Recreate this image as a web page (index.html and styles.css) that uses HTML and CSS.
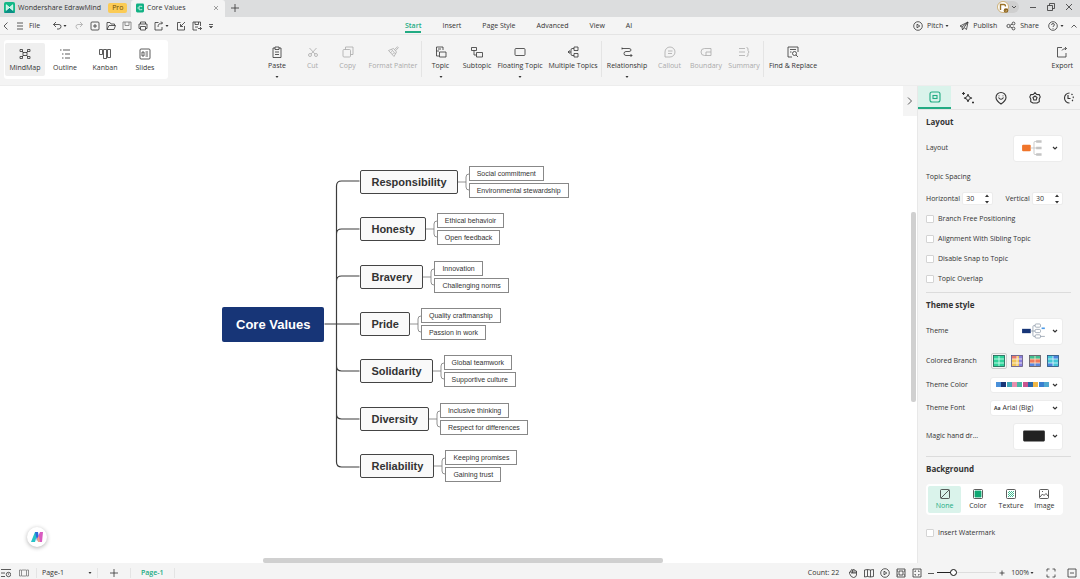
FILE: index.html
```
<!DOCTYPE html>
<html lang="en">
<head>
  <meta charset="UTF-8" />
  <meta name="viewport" content="width=device-width, initial-scale=1" />
  <title>Core Values - Wondershare EdrawMind</title>
  <link rel="stylesheet" href="styles.css">
</head>
<body>
  <!-- shared shapes -->
  <svg class="sprite" aria-hidden="true">
    <symbol id="caret" viewBox="0 0 6 6"><path d="M1.500 2h3L3 4z" fill="currentColor" stroke="none"/></symbol>
    <symbol id="chev" viewBox="0 0 6 6"><path d="M1 2l2 2 2-2"/></symbol>
    <symbol id="fork" viewBox="0 0 11 30"><path d="M0 15H8M11 7Q8 7 8 10V20Q8 23 11 23"/></symbol>
  </svg>

  <!-- TITLE BAR -->
  <header class="titlebar">
    <div class="app-name">
      <svg class="logo" viewBox="0 0 12 12"><rect width="12" height="12" rx="2" fill="#12b886"/><path d="M0 12L6 6l6 6z" fill="#0a8f86"/><path d="M2.500 9V3L6 6l3.500-3v6L6 6z" fill="#b9f3e0" stroke="#fff"/></svg>
      <span>Wondershare EdrawMind</span>
      <span class="pro">Pro</span>
    </div>
    <div class="doc-tab">
      <svg class="doc-logo" viewBox="0 0 9 10"><rect width="9" height="10" rx="1.500" fill="#10b183"/><path d="M1.500 5h2M3.500 3v4M3.500 3h3M3.500 7h3M6.500 3v1M6.500 6v1" stroke="#fff"/></svg>
      <span>Core Values</span>
      <button class="close-tab" aria-label="Close tab"><svg class="i6" viewBox="0 0 6 6"><path d="M1 1l4 4M5 1L1 5"/></svg></button>
    </div>
    <button class="new-tab" aria-label="New tab"><svg class="i8" viewBox="0 0 8 8"><path d="M4 0v8M0 4h8"/></svg></button>
    <div class="window-tools">
      <button class="avatar" aria-label="Account">
        <svg class="i12" viewBox="0 0 12 12"><circle cx="6" cy="6" r="5.500" fill="#fff" stroke="#c9a55c"/><path d="M3.500 9V3.500h3.500q1.500 0 1.500 2" stroke="#9a7228" stroke-width="1.400"/><circle cx="9" cy="9.500" r="2.300" fill="#8a611d" stroke="none"/><path d="M8 9.500l1 1 1-1.500" stroke="#ffe2a0" stroke-width=".6"/></svg>
        <svg class="i6"><use href="#chev"/></svg>
      </button>
      <button aria-label="Minimize"><svg class="i8" viewBox="0 0 8 8"><path d="M1 4.500h6"/></svg></button>
      <button aria-label="Restore"><svg class="i8" viewBox="0 0 8 8"><path d="M.5 2.500h5v5h-5zM2.500 2.500v-2h5v5h-2"/></svg></button>
      <button aria-label="Close"><svg class="i8" viewBox="0 0 8 8"><path d="M1 1l6 6M7 1L1 7"/></svg></button>
    </div>
  </header>

  <!-- MENU BAR -->
  <nav class="menubar">
    <div class="quick">
      <button aria-label="Back"><svg class="i8" viewBox="0 0 8 8"><path d="M5.500 0.500L2 4l3.500 3.500"/></svg></button>
      <button class="file"><svg class="i8" viewBox="0 0 8 8"><path d="M1 1h6M1 4h6M1 7h6"/></svg>File</button>
      <button aria-label="Undo"><svg class="i10" viewBox="0 0 10 10"><path d="M4 1L1.500 3.500 4 6M1.500 3.500H7q2 0 2 2T7 8H5"/></svg><svg class="i6"><use href="#caret"/></svg></button>
      <button class="off" aria-label="Redo"><svg class="i10" viewBox="0 0 10 10"><path d="M6 1l2.500 2.500L6 6M8.500 3.500H4q-2 0-2 2T4 8"/></svg></button>
      <button aria-label="New"><svg class="i10" viewBox="0 0 10 10"><rect x="1" y="1" width="8" height="8" rx="1"/><path d="M5 3v4M3 5h4"/></svg></button>
      <button aria-label="Open"><svg class="i10" viewBox="0 0 10 10"><path d="M1 8.500V1.500h3l1 1.500h3.500v1.500M1 8.500h7l1.500-4H3z"/></svg></button>
      <button class="dim" aria-label="Save"><svg class="i10" viewBox="0 0 10 10"><path d="M1 1h8v7.500H1zM3 1v3.500h4V1"/></svg></button>
      <button aria-label="Print"><svg class="i10" viewBox="0 0 10 10"><path d="M2.500 3V1h5v2M2.500 7.500H1V3h8v4.500H7.500M2.500 5.500h5V9h-5z"/></svg></button>
      <button aria-label="Export file"><svg class="i10" viewBox="0 0 10 10"><path d="M4.500 1.500H1V9h7V6M4 6q0-4 4.500-4M7 .5L8.500 2 7 3.500"/></svg><svg class="i6"><use href="#caret"/></svg></button>
      <button aria-label="Import"><svg class="i10" viewBox="0 0 10 10"><path d="M4.500 1.500H1.500V9h7V5M9 1L4.500 5.500M4.500 3v2.500H7"/></svg></button>
      <button aria-label="Save as"><svg class="i10" viewBox="0 0 10 10"><path d="M5 9H1V1h7.500v4M3 1v2.500h3.500V1M3 6h3M6 7.500h3.500M8 6l1.500 1.500L8 9"/></svg></button>
      <button aria-label="More quick actions"><svg class="i6" viewBox="0 0 6 6"><path d="M1 1.500h4M1.500 3.500L3 5l1.500-1.500z"/></svg></button>
    </div>
    <div class="menu-tabs">
      <a class="active" href="#start">Start</a>
      <a href="#insert">Insert</a>
      <a href="#page-style">Page Style</a>
      <a href="#advanced">Advanced</a>
      <a href="#view">View</a>
      <a href="#ai">AI</a>
    </div>
    <div class="share-tools">
      <button><svg class="i10" viewBox="0 0 10 10"><circle cx="5" cy="5" r="4.300"/><path d="M4 3.200v3.600L6.800 5z"/></svg>Pitch<svg class="i6"><use href="#caret"/></svg></button>
      <button><svg class="i10" viewBox="0 0 10 10"><path d="M1 5l8-4-1.500 7.500-2.500-2L3.500 9 3 6zM3 6l6-5-4 5.500"/></svg>Publish</button>
      <button><svg class="i10" viewBox="0 0 10 10"><circle cx="2.500" cy="5" r="1.600"/><circle cx="7.500" cy="2.500" r="1.400"/><circle cx="7.500" cy="7.500" r="1.400"/><path d="M4 4.300l2.200-1.200M4 5.700l2.200 1.200"/></svg>Share</button>
      <button class="help" aria-label="Help"><svg class="i10" viewBox="0 0 10 10"><circle cx="5" cy="5" r="4.300"/><path d="M3.600 4q0-1.500 1.400-1.500T6.400 4Q6.400 4.700 5 5.500V6M5 7v.8"/></svg><svg class="i6"><use href="#caret"/></svg></button>
      <button aria-label="Collapse ribbon"><svg class="i6" viewBox="0 0 6 6"><path d="M.5 4.500L3 2l2.500 2.500"/></svg></button>
    </div>
  </nav>

  <!-- RIBBON -->
  <section class="ribbon">
    <div class="views">
      <button class="active"><svg class="i12" viewBox="0 0 12 12"><path d="M3 3l6 6M9 3L3 9"/><rect x="4" y="4.500" width="4" height="3" fill="#efefef"/><path d="M1 1.500h2.500v2H1zM8.500 1.500H11v2H8.500zM1 8.500h2.500v2H1zM8.500 8.500H11v2H8.500z"/></svg>MindMap</button>
      <button><svg class="i12" viewBox="0 0 12 12"><path d="M1 2h1.500M4 2h7M3 6h1.500M6 6h5M3 10h1.500M6 10h5"/></svg>Outline</button>
      <button><svg class="i12" viewBox="0 0 12 12"><path d="M.5 1.500h3v5h-3zM4.500 1.500h3v9h-3zM8.500 1.500h3v8h-3z"/></svg>Kanban</button>
      <button><svg class="i12" viewBox="0 0 12 12"><rect x="1" y="1" width="10" height="10" rx="1"/><path d="M3 4h2v4H3zM6.500 4H9M6.500 6H9M6.500 8H9"/></svg>Slides</button>
    </div>
    <div class="tools">
      <div class="group clipboard">
        <button><svg class="i12" viewBox="0 0 12 12"><path d="M4 2H2v9.500h8V2H8M4 1h4v2.500H4zM4 6h4M4 8.500h4"/></svg>Paste<svg class="i6"><use href="#caret"/></svg></button>
        <button disabled><svg class="i12" viewBox="0 0 12 12"><circle cx="3" cy="9" r="1.500"/><circle cx="9" cy="9" r="1.500"/><path d="M2.500 2L8 8M9.500 2L4 8"/></svg>Cut</button>
        <button disabled><svg class="i12" viewBox="0 0 12 12"><rect x="1" y="3.500" width="7.500" height="7.500" rx="1"/><path d="M3.500 3.500V1H11v7.500H8.500"/></svg>Copy</button>
        <button disabled><svg class="i12" viewBox="0 0 12 12"><path d="M1.500 4.500L6.500 2.500 9.500 6 7 10.500z" /><path d="M4.500 3.500L8.500 8M7.500 3.500L10.500.8l.8.9L8.500 4.800M3.500 6.500L5 5.500M5.500 8.500L6.500 7"/></svg>Format Painter</button>
      </div>
      <div class="group topics">
        <button><svg class="i12" viewBox="0 0 12 12"><path d="M4 5H1.500V1H8v3M1.500 5v5H4M4.500 6H11v5H4.500zM3 3h3"/></svg>Topic<svg class="i6"><use href="#caret"/></svg></button>
        <button><svg class="i12" viewBox="0 0 12 12"><path d="M.5 1.500h5v3h-5zM3 4.500V9h2.500M5.500 6.500h6V11h-6z"/></svg>Subtopic</button>
        <button><svg class="i12" viewBox="0 0 12 12"><rect x="1" y="2.500" width="10" height="7" rx="1"/></svg>Floating Topic<svg class="i6"><use href="#caret"/></svg></button>
        <button><svg class="i12" viewBox="0 0 12 12"><path d="M1 6h3M3 4.500L1 6l2 1.500M7 2.500H5Q4 2.500 4 4v4q0 1.500 1 1.500h2M7 1h4v3.500H7zM7 7.500h4V11H7z"/></svg>Multiple Topics</button>
      </div>
      <div class="group links">
        <button><svg class="i12" viewBox="0 0 12 12"><path d="M1 2.500h7q2 0 2 1.500T8 5.500H5Q3 5.500 3 7.500t2 2h6M9.500 8l1.500 1.500L9.500 11M1 1.500v2"/></svg>Relationship<svg class="i6"><use href="#caret"/></svg></button>
        <button disabled><svg class="i12" viewBox="0 0 12 12"><path d="M1 11V6a5 5 0 1 1 5 5zM4 5h4.500M4 7.500h4"/></svg>Callout</button>
        <button disabled><svg class="i12" viewBox="0 0 12 12"><path d="M6 9.500H4.500a3.500 3.500 0 0 1 0-7H11v7H6V6h5"/></svg>Boundary</button>
        <button disabled><svg class="i12" viewBox="0 0 12 12"><path d="M1 2.500h6M1 6h6M1 9.500h6M8.500 1.500q1.500 0 1.500 1.500v1.500L11 6 10 7.500V9q0 1.500-1.500 1.500"/></svg>Summary</button>
      </div>
      <div class="group find">
        <button><svg class="i12" viewBox="0 0 12 12"><path d="M5 11H1V1h10v5M3 3.500h6M3 6h1.500"/><circle cx="7.500" cy="7.500" r="2"/><path d="M9 9l2 2"/></svg>Find &amp; Replace</button>
      </div>
    </div>
    <button class="export"><svg class="i12" viewBox="0 0 12 12"><path d="M6 1.500H1.500V11H10V7M6 4.500q.500-2 4.500-2M9 1l1.500 1.500L9 4"/></svg>Export</button>
  </section>

  <main class="workspace">
    <!-- MIND MAP -->
    <section class="canvas">
      <div class="map">
        <div class="root">Core Values</div>
        <svg class="trunk" viewBox="0 0 35 316"><path d="M0 158H35M12 158V20Q12 15 17 15H35M12 68Q12 63 17 63H35M12 115Q12 110 17 110H35M12 200Q12 205 17 205H35M12 248Q12 253 17 253H35M12 158V296Q12 301 17 301H35"/></svg>
        <ul class="branches">
          <li><span class="topic">Responsibility</span><svg class="fork"><use href="#fork"/></svg><ul class="leaves"><li>Social commitment</li><li>Environmental stewardship</li></ul></li>
          <li><span class="topic">Honesty</span><svg class="fork"><use href="#fork"/></svg><ul class="leaves"><li>Ethical behavioir</li><li>Open feedback</li></ul></li>
          <li><span class="topic">Bravery</span><svg class="fork"><use href="#fork"/></svg><ul class="leaves"><li>Innovation</li><li>Challenging norms</li></ul></li>
          <li><span class="topic">Pride</span><svg class="fork"><use href="#fork"/></svg><ul class="leaves"><li>Quality craftmanship</li><li>Passion in work</li></ul></li>
          <li><span class="topic">Solidarity</span><svg class="fork"><use href="#fork"/></svg><ul class="leaves"><li>Global teamwork</li><li>Supportive culture</li></ul></li>
          <li><span class="topic">Diversity</span><svg class="fork"><use href="#fork"/></svg><ul class="leaves"><li>Inclusive thinking</li><li>Respect for differences</li></ul></li>
          <li><span class="topic">Reliability</span><svg class="fork"><use href="#fork"/></svg><ul class="leaves"><li>Keeping promises</li><li>Gaining trust</li></ul></li>
        </ul>
      </div>
      <button class="collapse" aria-label="Collapse panel"><svg class="i8" viewBox="0 0 8 8"><path d="M2 .5L5.500 4 2 7.500"/></svg></button>
      <button class="assistant" aria-label="AI assistant">
        <svg class="i12" viewBox="0 0 12 12"><path d="M0 11L4 1h3L4 11z" fill="#25c3c8" stroke="none"/><path d="M4 1h3l1 6-2 3z" fill="#2b6cd8" stroke="none"/><path d="M6 8L9 1h3l-1 10H8V7z" fill="#d95bc0" stroke="none"/><path d="M6 8l2-3 1 6H7z" fill="#f2a08c" stroke="none"/></svg>
      </button>
      <div class="scroll-v"></div>
      <div class="scroll-h"></div>
    </section>

    <!-- SIDE PANEL -->
    <aside class="panel">
      <div class="panel-tabs">
        <button class="active" aria-label="Style"><svg class="i14" viewBox="0 0 14 14"><rect x="2" y="2" width="10" height="10" rx="2"/><rect x="5" y="5.500" width="4" height="3"/></svg></button>
        <button aria-label="AI tools"><svg class="i14" viewBox="0 0 14 14"><path d="M7 3q.5 3.500 4 4-3.500.5-4 4-.5-3.500-4-4 3.500-.500 4-4z"/><path d="M2.500 1v3M1 2.500h3M12 10.500v2M11 11.500h2" /></svg></button>
        <button aria-label="Icons"><svg class="i14" viewBox="0 0 14 14"><path d="M7 13Q2 9.500 2 6.500a5 5 0 0 1 10 0Q12 9.500 7 13zM4.500 6.500q2.500 3.500 5 0M5 4.500v.8M9 4.500v.8"/></svg></button>
        <button aria-label="Clipart"><svg class="i14" viewBox="0 0 14 14"><path d="M7 1.500l1.700 2 2.500.1 1 2.300-1 2.200.1 2.500-2.200 1.400H4.900l-2.200-1.400.1-2.500-1-2.200 1-2.300 2.500-.1z"/><path d="M7 5l2 1.500-.8 2.500H5.800L5 6.500z"/></svg></button>
        <button aria-label="History"><svg class="i14" viewBox="0 0 14 14"><path d="M8.500 12A5 5 0 1 1 8.500 2M7 4v3.500h2.500"/><path d="M10.500 3A5 5 0 0 1 10 11" stroke-dasharray="1.500 1.500"/></svg></button>
      </div>

      <section class="block">
        <h2>Layout</h2>
        <div class="row tall"><span>Layout</span>
          <button class="picker" aria-label="Layout"><svg class="thumb" viewBox="0 0 24 16"><rect x="1" y="5" width="8" height="6" rx="1" fill="#f0752b"/><path d="M9 8h3M15 2h-2q-1 0-1 1v10q0 1 1 1h2M12 8h3" stroke="#c4c4c4"/><path d="M14 2h5M14 8h5M14 14h5" stroke="#c4c4c4" stroke-width="2.500"/></svg><svg class="i6"><use href="#chev"/></svg></button>
        </div>
        <p class="sub">Topic Spacing</p>
        <div class="spacing">
          <label for="hor">Horizontal</label>
          <span class="spin"><input id="hor" type="text" inputmode="numeric" value="30"><svg class="steps" viewBox="0 0 6 12"><path d="M1 4l2-2.500L5 4zM1 8l2 2.500L5 8z"/></svg></span>
          <label for="ver">Vertical</label>
          <span class="spin"><input id="ver" type="text" inputmode="numeric" value="30"><svg class="steps" viewBox="0 0 6 12"><path d="M1 4l2-2.500L5 4zM1 8l2 2.500L5 8z"/></svg></span>
        </div>
        <label class="check"><input type="checkbox">Branch Free Positioning</label>
        <label class="check"><input type="checkbox">Alignment With Sibling Topic</label>
        <label class="check"><input type="checkbox">Disable Snap to Topic</label>
        <label class="check"><input type="checkbox">Topic Overlap</label>
      </section>

      <section class="block">
        <h2>Theme style</h2>
        <div class="row tall"><span>Theme</span>
          <button class="picker" aria-label="Theme"><svg class="thumb" viewBox="0 0 24 16"><rect x="1" y="6" width="8" height="4" fill="#173577"/><g fill="none" stroke="#8d99a8" stroke-width=".7"><path d="M9 8h2M13 3h-1q-1 0-1 1v8q0 1 1 1h1M11 8h2"/><rect x="13" y="1.500" width="5" height="3" rx="1"/><rect x="13" y="6.500" width="5" height="3" rx="1"/><rect x="13" y="11.500" width="5" height="3" rx="1"/><path d="M18 13h4"/></g><path d="M19 5.500h3" stroke="#4c9be8" stroke-width="1.500"/></svg><svg class="i6"><use href="#chev"/></svg></button>
        </div>
        <div class="row"><span>Colored Branch</span>
          <span class="swatches">
            <button class="active" aria-label="Branch colors 1"><svg class="i12" viewBox="0 0 12 12"><rect x=".5" y=".5" width="11" height="11" fill="#2fd39a" stroke="#1d5e50"/><path d="M6 1v10M1 4h10M1 8h10" stroke="#e2fff5"/></svg></button>
            <button aria-label="Branch colors 2"><svg class="i12" viewBox="0 0 12 12"><rect x=".5" y=".5" width="11" height="11" fill="#f0c65a" stroke="#56508c"/><path d="M1 1h5v3H1z" fill="#e8796a" stroke="none"/><path d="M8 1h3v10H8z" fill="#8b80df" stroke="none"/><path d="M6 1v10M1 4h10M1 8h10" stroke="#fff6ee"/></svg></button>
            <button aria-label="Branch colors 3"><svg class="i12" viewBox="0 0 12 12"><rect x=".5" y=".5" width="11" height="11" fill="#ef795c" stroke="#505a68"/><path d="M1 1h10v3H1z" fill="#42be91" stroke="none"/><path d="M1 8h10v3H1z" fill="#5b87e0" stroke="none"/><path d="M6 1v10M1 4h10M1 8h10" stroke="#ffe6c8"/></svg></button>
            <button aria-label="Branch colors 4"><svg class="i12" viewBox="0 0 12 12"><rect x=".5" y=".5" width="11" height="11" fill="#43c7d6" stroke="#274d7c"/><path d="M6 1h5v3H6zM1 8h5v3H1z" fill="#4a85de" stroke="none"/><path d="M6 1v10M1 4h10M1 8h10" stroke="#dff6ff"/></svg></button>
          </span>
        </div>
        <div class="row short"><span>Theme Color</span>
          <button class="wide" aria-label="Theme Color"><svg class="palette" viewBox="0 0 53 5"><path d="M0 0h5v5H0z" fill="#4a90d9"/><path d="M5 0h5v5H5z" fill="#173577"/><path d="M11 0h5v5h-5z" fill="#3fa7b8"/><path d="M16 0h5v5h-5z" fill="#e58fae"/><path d="M21 0h5v5h-5z" fill="#48b8a4"/><path d="M27 0h5v5h-5z" fill="#c7558f"/><path d="M32 0h5v5h-5z" fill="#2967a8"/><path d="M37 0h5v5h-5z" fill="#efb645"/><path d="M43 0h5v5h-5z" fill="#397fd0"/><path d="M48 0h5v5h-5z" fill="#4fa8d0"/></svg><svg class="i6"><use href="#chev"/></svg></button>
        </div>
        <div class="row short"><label for="font">Theme Font</label>
          <span class="wide"><small>Aa</small><select id="font"><option>Arial (Big)</option></select><svg class="i6"><use href="#chev"/></svg></span>
        </div>
        <div class="row magic"><span>Magic hand dr...</span>
          <button class="picker" aria-label="Magic hand drawing"><svg class="thumb" viewBox="0 0 24 16"><rect x="2" y="3" width="20" height="10" rx="1" fill="#222"/></svg><svg class="i6"><use href="#chev"/></svg></button>
        </div>
      </section>

      <section class="block">
        <h2>Background</h2>
        <div class="fills">
          <button class="active"><svg class="i10" viewBox="0 0 10 10"><rect x=".5" y=".5" width="9" height="9" rx="1"/><path d="M1 9l8-8"/></svg>None</button>
          <button><svg class="i10" viewBox="0 0 10 10"><rect x=".5" y=".5" width="9" height="9" rx="1"/><path d="M2 2h6v6H2z" fill="#10a873" stroke="#10a873"/></svg>Color</button>
          <button><svg class="i10" viewBox="0 0 10 10"><rect x=".5" y=".5" width="9" height="9" rx="1"/><path d="M2 4l2-2M2 6l4-4M2 8l6-6M4 8l4-4M6 8l2-2" stroke="#10a873"/></svg>Texture</button>
          <button><svg class="i10" viewBox="0 0 10 10"><rect x=".5" y=".5" width="9" height="9" rx="1"/><path d="M1 8l2.500-3L5 6.500 7 4.500 9 7M3 2.500h1"/></svg>Image</button>
        </div>
        <label class="check"><input type="checkbox">Insert Watermark</label>
      </section>
    </aside>
  </main>

  <!-- STATUS BAR -->
  <footer class="statusbar">
    <div class="pages">
      <button aria-label="Outline pane"><svg class="i10" viewBox="0 0 10 10"><path d="M0 1.500h10M0 5h4M0 8.500h4"/><circle cx="7.500" cy="6.500" r="2.200"/><path d="M7.500 5.500v1.200"/></svg></button>
      <button class="dim" aria-label="Page view"><svg class="i10" viewBox="0 0 10 10"><path d="M2.500 2h5v6h-5zM2 2H.5v6H2M8 2h1.500v6H8"/></svg></button>
      <span class="page-select"><select aria-label="Page"><option>Page-1</option></select><svg class="i6"><use href="#caret"/></svg></span>
      <button class="add-page" aria-label="Add page"><svg class="i8" viewBox="0 0 8 8"><path d="M4 0v8M0 4h8"/></svg></button>
      <a class="page-tab" href="#page-1">Page-1</a>
    </div>
    <div class="view-tools">
      <span class="count">Count: 22</span>
      <button aria-label="Pan"><svg class="i10" viewBox="0 0 10 10"><path d="M1.500 5.500V4q1-1 1.500 0V2q1-1 1.500 0 .5-1.500 1.500 0 1-.5 1.500.500Q9 2.500 8.500 5v2q-.5 2.500-3 2.500-2.500 0-4-4z"/><path d="M3 4v1h5V3M4.500 2v3M6 2v3"/></svg></button>
      <button aria-label="Minimap"><svg class="i10" viewBox="0 0 10 10"><path d="M.5 2l3-.5v7l-3 .5zM3.500 1.500l3 .5v7l-3-.5M6.500 2l3-.5v7l-3 .5"/></svg></button>
      <button aria-label="Present"><svg class="i10" viewBox="0 0 10 10"><circle cx="5" cy="5" r="4.300"/><path d="M4 3.200v3.600L6.800 5z"/></svg></button>
      <button aria-label="Fit width"><svg class="i10" viewBox="0 0 10 10"><path d="M1 1h8v8H1zM3 3h4v4H3zM1 3h1M8 3h1M1 7h1M8 7h1"/></svg></button>
      <button aria-label="Fit page"><svg class="i10" viewBox="0 0 10 10"><path d="M1 1h8v8H1zM3 4V3h1M6 3h1v1M7 6v1H6M4 7H3V6"/></svg></button>
      <span class="zoom">
        <button aria-label="Zoom out"><svg class="i6" viewBox="0 0 6 6"><path d="M0 3.500h6"/></svg></button>
        <input type="range" min="0" max="100" value="24" aria-label="Zoom">
        <button aria-label="Zoom in"><svg class="i6" viewBox="0 0 6 6"><path d="M3 .5v5M.5 3h5"/></svg></button>
      </span>
      <button class="percent">100%<svg class="i6"><use href="#caret"/></svg></button>
      <button class="screen" aria-label="Full screen"><svg class="i10" viewBox="0 0 10 10"><path d="M1 3.500V1h2.500M6.500 1H9v2.500M9 6.500V9H6.500M3.500 9H1V6.500"/></svg></button>
      <button class="screen" aria-label="Hide bar"><svg class="i10" viewBox="0 0 10 10"><path d="M1 1h8v8H1zM3 5h4"/></svg></button>
    </div>
  </footer>
</body>
</html>
```
FILE: styles.css
```
:root {
  --green: #22ab83;
  --mint: #daf3eb;
  --bar: #f4f4f4;
  --line: #e4e4e4;
  --text: #333;
  --navy: #173577;
  --ui-font: "Open Sans", "Noto Sans", sans-serif;
  --map-font: "Liberation Sans", Arial, sans-serif;
}
* {
  margin: 0;
  padding: 0;
  box-sizing: border-box;
}
body {
  display: flex;
  flex-direction: column;
  height: 100vh;
  overflow: hidden;
  background: var(--bar);
  color: var(--text);
  font: 7px/10px var(--ui-font);
  white-space: nowrap;
}
button,
input,
select {
  border: none;
  background: none;
  color: inherit;
  font: inherit;
  appearance: none;
}
button {
  display: flex;
  align-items: center;
  justify-content: center;
  cursor: pointer;
}
a {
  color: inherit;
  text-decoration: none;
}
ul {
  list-style: none;
}

/* Icons */
svg {
  flex: none;
  fill: none;
  stroke: currentColor;
  stroke-width: 0.8;
}
.sprite { position: absolute; width: 0; height: 0; }
.i6 { width: 6px; height: 6px; }
.i8 { width: 8px; height: 8px; }
.i10 { width: 10px; height: 10px; }
.i12 { width: 12px; height: 12px; }
.i14 { width: 14px; height: 14px; stroke-width: 1.1; }

/* Title bar */
.titlebar {
  display: flex;
  height: 17px;
  background: #dcddde;
}
.app-name {
  display: flex;
  align-items: center;
  gap: 3px;
  width: 131px;
  padding: 0 0 2px 4px;
}
.logo { width: 11px; height: 11px; }
.pro {
  margin-left: 4px;
  padding: 0 4px;
  border-radius: 2px;
  background: #fbcb55;
  color: #6b4708;
}
.doc-tab {
  display: flex;
  align-items: center;
  gap: 3px;
  width: 94px;
  padding: 0 6px 2px 5px;
  border-radius: 3px 3px 0 0;
  background: var(--bar);
}
.doc-logo { width: 8px; height: 10px; }
.doc-logo,
.logo { stroke: none; }
.close-tab { margin-left: auto; color: #888; }
.new-tab { width: 20px; padding-bottom: 2px; }
.window-tools {
  display: flex;
  align-items: center;
  gap: 10px;
  margin-left: auto;
  padding: 0 7px 4px 0;
}
.avatar {
  gap: 2px;
  padding: 0 2px 0 0;
  border-radius: 6px;
  background: #cfcfcf;
}

/* Menu bar */
.menubar {
  display: flex;
  height: 18px;
  border-bottom: 1px solid var(--line);
}
.quick {
  display: flex;
  flex: 0 0 405px;
  align-items: center;
  gap: 6px;
  padding-left: 2px;
}
.file { gap: 5px; margin-right: 6px; }
.off { color: #aaa; }
.dim { color: #777; }
.menu-tabs {
  display: flex;
  gap: 21px;
}
.menu-tabs a {
  height: 16px;
  padding-top: 4px;
  border-bottom: 2px solid transparent;
}
.menu-tabs .active {
  border-color: var(--green);
  color: var(--green);
  font-weight: 600;
}
.share-tools {
  display: flex;
  align-items: center;
  gap: 9px;
  margin-left: auto;
  padding-right: 3px;
}
.share-tools button { gap: 4px; }
.share-tools .i6 { margin-left: -3px; }

/* Ribbon */
.ribbon {
  display: flex;
  height: 51px;
  border-bottom: 1px solid #ededed;
}
.ribbon button {
  flex-direction: column;
  justify-content: flex-start;
}
.ribbon button:disabled { color: #aaa; }
.views {
  display: flex;
  width: 164px;
  height: 39px;
  margin: 5px 0 0 4px;
  padding: 3px 1px;
  border-radius: 3px;
  background: #fff;
}
.views button {
  width: 40px;
  gap: 3px;
  padding-top: 5px;
  border-radius: 2px;
}
.views .active { background: #efefef; }
.tools {
  display: flex;
  margin: 6px 0 8px 91px;
}
.group {
  display: grid;
}
.group + .group { border-left: 1px solid var(--line); }
.group button,
.export {
  gap: 3px;
  padding-top: 5px;
}
.clipboard { grid-template-columns: 36px 35px 35px 56px; }
.topics { grid-template-columns: 37px 36px 50px 56px; }
.links { grid-template-columns: 50px 35px 38px 38px; }
.find { grid-template-columns: 58px; }
.export {
  margin: 6px 7px 0 auto;
}

/* Canvas */
.workspace {
  display: flex;
  flex: 1;
  min-height: 0;
}
.canvas {
  position: relative;
  flex: 1;
  padding: 80px 0 0 222px;
  background: #fff;
}
.map {
  display: flex;
  align-items: center;
  font-family: var(--map-font);
}
.root {
  padding: 0 14px;
  border-radius: 2px;
  background: var(--navy);
  color: #fff;
  font-size: 13px;
  font-weight: bold;
  line-height: 35px;
}
.trunk {
  width: 36px;
  height: 316px;
  stroke: #3c3c3c;
  stroke-width: 1.2;
}
.branches {
  display: flex;
  flex-direction: column;
  justify-content: space-between;
  height: 316px;
}
.branches > li {
  display: flex;
  align-items: center;
}
.topic {
  padding: 0 10px;
  border: 1px solid #444;
  border-radius: 2px;
  background: #f9f9f9;
  font-size: 11px;
  font-weight: bold;
  line-height: 22px;
}
.fork {
  width: 11px;
  height: 30px;
  stroke: #777;
}
.leaves {
  display: flex;
  flex-direction: column;
  align-items: flex-start;
  gap: 2px;
}
.leaves li {
  padding: 1px 7px 0;
  border: 1px solid #888;
  line-height: 12px;
}

/* Pieces that float over the canvas */
.collapse {
  position: absolute;
  top: 0;
  right: 0;
  width: 14px;
  height: 30px;
  background: var(--bar);
}
.assistant {
  position: absolute;
  bottom: 16px;
  left: 27px;
  width: 20px;
  height: 20px;
  border-radius: 50%;
  background: #fff;
  box-shadow: 0 1px 4px rgba(0, 0, 0, 0.3);
}
.scroll-v,
.scroll-h {
  position: absolute;
  border-radius: 2px;
  background: #d0d0d0;
}
.scroll-v {
  top: 126px;
  right: 1px;
  width: 5px;
  height: 190px;
}
.scroll-h {
  bottom: 0;
  left: 263px;
  width: 400px;
  height: 5px;
}

/* Side panel */
.panel {
  width: 163px;
  overflow: hidden;
  border-left: 1px solid #e8e8e8;
}
.panel-tabs {
  display: grid;
  grid-template-columns: repeat(5, 1fr);
  width: 167px;
  height: 24px;
  border-bottom: 1px solid var(--line);
}
.panel-tabs .active {
  border-bottom: 2px solid var(--green);
  background: var(--mint);
  color: var(--green);
}
.block {
  margin: 0 9px 0 8px;
  padding: 0 8px 3px 0;
}
.block + .block { border-top: 1px solid #dcdcdc; }
.block h2 {
  font-size: 8px;
  line-height: 24px;
}
.row {
  display: flex;
  align-items: center;
  justify-content: space-between;
  height: 24px;
}
.tall { height: 28px; }
.tall + .row { margin-top: 4px; }
.short { height: 23px; }
.magic { height: 34px; }
.picker,
.wide {
  display: flex;
  align-items: center;
  border: 1px solid #ececec;
  border-radius: 3px;
  background: #fff;
}
.picker {
  width: 50px;
  height: 27px;
  justify-content: space-between;
  padding: 0 4px 0 7px;
}
.picker .i6,
.wide .i6 { stroke-width: 1.2; }
.thumb { width: 26px; height: 18px; stroke: none; }
.sub { line-height: 29px; }
.spacing {
  display: flex;
  align-items: center;
  justify-content: space-between;
  height: 15px;
  margin-bottom: 3px;
}
.spin {
  display: flex;
  align-items: center;
  width: 31px;
  height: 13px;
  padding-left: 3px;
  border: 1px solid #ececec;
  border-radius: 2px;
  background: #fff;
}
.spacing .spin:nth-of-type(1) { margin-right: 10px; }
.spin input {
  flex: 1;
  min-width: 0;
}
.steps {
  width: 6px;
  height: 12px;
  margin-right: 2px;
  fill: #333;
  stroke: none;
}
.check {
  display: flex;
  align-items: center;
  gap: 4px;
  height: 20px;
}
.check input {
  width: 8px;
  height: 8px;
  border: 1px solid #d4d4d4;
  border-radius: 1px;
  background: #fff;
}
.swatches {
  display: flex;
  gap: 2px;
  margin-right: 2px;
}
.swatches button {
  width: 16px;
  height: 16px;
  border-radius: 2px;
}
.swatches .active { border: 1px solid #ccc; }
.wide {
  width: 73px;
  height: 16px;
  justify-content: space-between;
  padding: 0 4px 0 3px;
}
.wide small {
  font-size: 5px;
  font-weight: bold;
}
.wide select {
  flex: 1;
  margin-left: 2px;
}
.palette {
  width: 53px;
  height: 5px;
  margin-left: 2px;
  stroke: none;
}
.fills {
  display: grid;
  grid-template-columns: repeat(4, 1fr);
  margin: 3px 0 8px;
  padding: 2px;
  border-radius: 4px;
  background: #fff;
}
.fills button {
  flex-direction: column;
  gap: 2px;
  padding: 3px 0 2px;
  border-radius: 2px;
}
.fills .active {
  background: var(--mint);
  color: var(--green);
}
.fills .active svg { color: var(--text); }

/* Status bar */
.statusbar {
  display: flex;
  justify-content: space-between;
  height: 16px;
  padding-top: 3px;
}
.pages,
.view-tools,
.zoom {
  display: flex;
  align-items: center;
}
.pages > button:first-child { margin: 0 8px 0 1px; }
.page-select {
  display: flex;
  align-items: center;
  width: 62px;
  margin-left: 7px;
  padding: 0 4px 0 5px;
  border: solid var(--line);
  border-width: 0 1px;
}
.page-select select { flex: 1; }
.add-page { width: 32px; }
.page-tab {
  padding: 0 10px;
  border: solid var(--line);
  border-width: 0 1px;
  color: var(--green);
  font-weight: 600;
}
.view-tools { gap: 6px; padding-right: 3px; }
.count { margin-right: 3px; }
.zoom { gap: 3px; }
.zoom input {
  width: 59px;
  height: 7px;
  background: linear-gradient(to right, #222 25%, #ddd 25%) center / 100% 1px no-repeat;
}
.zoom input::-webkit-slider-thumb {
  appearance: none;
  width: 7px;
  height: 7px;
  border: 1px solid #111;
  border-radius: 50%;
  background: #fff;
}
.screen { margin-left: 5px; }
```
